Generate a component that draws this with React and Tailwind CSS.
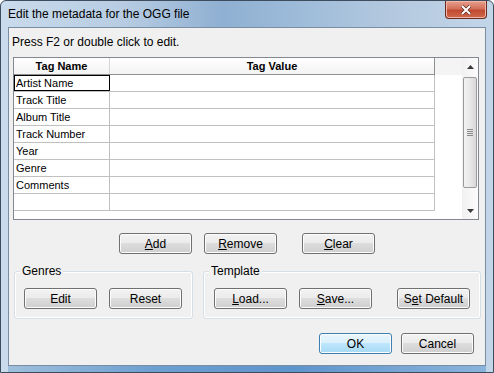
const rows = ['Artist Name', 'Track Title', 'Album Title', 'Track Number', 'Year', 'Genre', 'Comments', ''];

function Btn({ children, className = '', primary = false }) {
    return (
        <button
            className={
                'h-[21px] w-[73px] rounded-[3px] border text-[12px] leading-none text-black shadow-[inset_0_0_0_1px_#fcfcfc] ' +
                (primary
                    ? 'border-[#3c7fb1] bg-[linear-gradient(#eaf6fd_0%,#d9f0fc_49%,#bee6fd_50%,#a7d9f5_100%)] '
                    : 'border-[#707070] bg-[linear-gradient(#f2f2f2_0%,#ebebeb_49%,#dddddd_50%,#cfcfcf_100%)] ') +
                className
            }
        >
            {children}
        </button>
    );
}

function Group({ label, className = '', children }) {
    return (
        <div className={'relative h-[48px] rounded-[3px] border border-[#d5dfe5] shadow-[inset_0_0_0_1px_#fff] ' + className}>
            <span className="absolute -top-[8px] left-[5px] bg-[#f0f0f0] px-[2px] text-[12px] leading-[14px] text-black">{label}</span>
            {children}
        </div>
    );
}

export default function App() {
    return (
        <div className="flex h-[373px] w-[494px] flex-col overflow-hidden rounded-t-[6px] border border-[#3d4d5e] bg-[linear-gradient(90deg,#c9dbec_0%,#b7cce2_25%,#8fb0d2_45%,#9dbbd9_60%,#b4c9df_80%,#c3d5e8_100%)] font-['Liberation_Sans',Arial,sans-serif]">
            {/* title bar */}
            <div className="flex h-[26px] shrink-0 items-start">
                <div className="pl-[7px] pt-[6px] text-[12px] leading-[14px] text-black">Edit the metadata for the OGG file</div>
                <div className="ml-auto mr-[6px] flex h-[18px] w-[42px] items-center justify-center rounded-b-[4px] border border-t-0 border-[#6b2a1f] bg-[linear-gradient(#e8a08f_0%,#d3705a_45%,#c04a30_55%,#d06a4c_100%)] shadow-[inset_0_0_0_1px_#f0b7a8]">
                    <svg width="12" height="10" viewBox="0 0 12 10">
                        <path d="M2 1 L10 9 M10 1 L2 9" stroke="#5a2a22" strokeWidth="3.4" />
                        <path d="M2 1 L10 9 M10 1 L2 9" stroke="#fff" strokeWidth="2" />
                    </svg>
                </div>
            </div>

            {/* client area */}
            <div className="mx-[7px] flex h-[340px] flex-col border border-[#7a8ea3] bg-[#f0f0f0]">
                <div className="pl-[3px] pt-[7px] text-[12px] leading-[14px] text-black">Press F2 or double click to edit.</div>

                {/* grid */}
                <div className="ml-[4px] mt-[8px] flex h-[163px] w-[466px] border border-[#828790] bg-white text-[11px] text-black">
                    <div className="flex flex-1 flex-col">
                        <div className="flex h-[17px] bg-[#f4f4f4]">
                            <div className="flex w-[421px] border-b border-r border-[#8e8f8f] bg-[linear-gradient(#ffffff,#f3f3f3)]">
                                <div className="flex w-[96px] items-center justify-center border-r border-[#d5d5d5] font-bold">Tag Name</div>
                                <div className="flex flex-1 items-center justify-center font-bold">Tag Value</div>
                            </div>
                        </div>
                        {rows.map((r, i) => (
                            <div key={i} className="flex h-[17px] w-[421px] border-b border-r border-[#c0c0c0]">
                                <div className={'flex w-[96px] items-center border-r border-[#c0c0c0] pl-[2px] ' + (i === 0 ? 'outline outline-1 -outline-offset-1 outline-black' : '')}>
                                    {r}
                                </div>
                                <div className="flex-1" />
                            </div>
                        ))}
                    </div>

                    {/* scrollbar */}
                    <div className="flex w-[16px] flex-col bg-[linear-gradient(90deg,#f1f1f1,#fbfbfb)]">
                        <div className="flex h-[17px] items-center justify-center">
                            <svg width="7" height="4" viewBox="0 0 7 4"><path d="M0 4 L3.5 0 L7 4 Z" fill="#3a3a3a" /></svg>
                        </div>
                        <div className="mx-[1px] mt-[2px] flex h-[111px] items-center justify-center rounded-[2px] border border-[#9a9a9a] bg-[linear-gradient(90deg,#f3f3f3,#e8e8e8_50%,#d8d8d8)]">
                            <div className="flex flex-col gap-[1px]">
                                <div className="h-px w-[6px] bg-[#8a8a8a]" />
                                <div className="h-px w-[6px] bg-[#8a8a8a]" />
                                <div className="h-px w-[6px] bg-[#8a8a8a]" />
                                <div className="h-px w-[6px] bg-[#8a8a8a]" />
                            </div>
                        </div>
                        <div className="mt-auto flex h-[17px] items-center justify-center">
                            <svg width="7" height="4" viewBox="0 0 7 4"><path d="M0 0 L3.5 4 L7 0 Z" fill="#3a3a3a" /></svg>
                        </div>
                    </div>
                </div>

                {/* add/remove/clear */}
                <div className="ml-[110px] mt-[13px] flex">
                    <Btn><u>A</u>dd</Btn>
                    <Btn className="ml-[12px]"><u>R</u>emove</Btn>
                    <Btn className="ml-[25px]"><u>C</u>lear</Btn>
                </div>

                {/* groups */}
                <div className="mt-[17px] flex">
                    <Group label="Genres" className="ml-[5px] w-[179px]">
                        <div className="ml-[9px] mt-[16px] flex gap-[12px]">
                            <Btn>Edit</Btn>
                            <Btn>Reset</Btn>
                        </div>
                    </Group>
                    <Group label="Template" className="ml-[10px] w-[278px]">
                        <div className="ml-[10px] mt-[16px] flex">
                            <Btn><u>L</u>oad...</Btn>
                            <Btn className="ml-[12px]"><u>S</u>ave...</Btn>
                            <Btn className="ml-[25px]">S<u>e</u>t Default</Btn>
                        </div>
                    </Group>
                </div>

                {/* ok/cancel */}
                <div className="mt-[14px] flex justify-end pr-[11px]">
                    <Btn primary className="w-[72px]">OK</Btn>
                    <Btn className="ml-[9px] w-[72px]">Cancel</Btn>
                </div>
            </div>

            {/* bottom frame */}
            <div className="mx-[7px] h-[6px] bg-[linear-gradient(90deg,#9fbfdc,#6d9fd0_30%,#5f94cc_60%,#8ab3db)]" />
        </div>
    );
}
